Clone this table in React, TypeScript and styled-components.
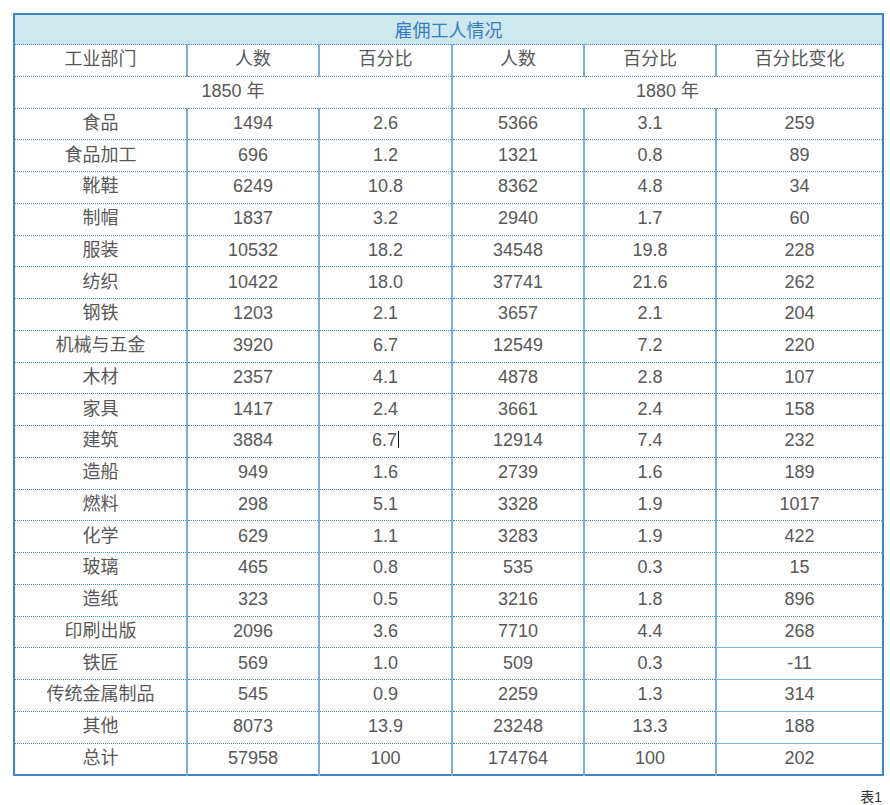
import React from "react";
import styled, { createGlobalStyle } from "styled-components";

const GlobalStyle = createGlobalStyle`
  html, body {
    margin: 0;
    padding: 0;
    background: #ffffff;
  }
  body {
    font-family: "Liberation Sans", "Noto Sans CJK SC", sans-serif;
  }
`;

const outerBlue = "#3f85c5";
const innerBlue = "#7eaed8";
const dotBlue = "#3e8fd8";

const Page = styled.div`
  width: 890px;
  height: 805px;
  padding: 13px 0 0 13px;
  box-sizing: border-box;
`;

const Table = styled.table`
  width: 869px;
  border-collapse: collapse;
  table-layout: fixed;
  border: 2px solid ${outerBlue};
  color: #585858;
  font-size: 18px;
  font-weight: 400;
`;

const TitleCell = styled.th`
  height: 27px;
  padding: 0 0 2px;
  background: #cde9ef;
  color: #3a7bbf;
  font-weight: 400;
  font-size: 18px;
  line-height: 1;
  font-family: "Noto Sans CJK SC", sans-serif;
  text-align: center;
  border-bottom: 1px dotted ${dotBlue};
`;

const Cell = styled.td<{ $solid?: boolean }>`
  height: 28.75px;
  padding: 0 0 2px;
  text-align: center;
  vertical-align: middle;
  line-height: 1;
  border-left: 2px solid ${innerBlue};
  border-right: 2px solid ${innerBlue};
  border-top: 1px ${(p) => (p.$solid ? "solid" : "dotted")} ${(p) => (p.$solid ? innerBlue : dotBlue)};
  border-bottom: 1px ${(p) => (p.$solid ? "solid" : "dotted")} ${(p) => (p.$solid ? innerBlue : dotBlue)};

  &:first-child {
    border-left: none;
  }
  &:last-child {
    border-right: none;
  }
`;

const Caret = styled.span`
  display: inline-block;
  width: 0;
  height: 17px;
  margin-left: 1px;
  border-left: 1px solid #111;
  vertical-align: -2px;
`;

const Caption = styled.div`
  width: 869px;
  margin-top: 10px;
  text-align: right;
  font-size: 14px;
  color: #333333;
`;

type Row = [string, string, string, string, string, string];

const rows: Row[] = [
  ["食品", "1494", "2.6", "5366", "3.1", "259"],
  ["食品加工", "696", "1.2", "1321", "0.8", "89"],
  ["靴鞋", "6249", "10.8", "8362", "4.8", "34"],
  ["制帽", "1837", "3.2", "2940", "1.7", "60"],
  ["服装", "10532", "18.2", "34548", "19.8", "228"],
  ["纺织", "10422", "18.0", "37741", "21.6", "262"],
  ["钢铁", "1203", "2.1", "3657", "2.1", "204"],
  ["机械与五金", "3920", "6.7", "12549", "7.2", "220"],
  ["木材", "2357", "4.1", "4878", "2.8", "107"],
  ["家具", "1417", "2.4", "3661", "2.4", "158"],
  ["建筑", "3884", "6.7", "12914", "7.4", "232"],
  ["造船", "949", "1.6", "2739", "1.6", "189"],
  ["燃料", "298", "5.1", "3328", "1.9", "1017"],
  ["化学", "629", "1.1", "3283", "1.9", "422"],
  ["玻璃", "465", "0.8", "535", "0.3", "15"],
  ["造纸", "323", "0.5", "3216", "1.8", "896"],
  ["印刷出版", "2096", "3.6", "7710", "4.4", "268"],
  ["铁匠", "569", "1.0", "509", "0.3", "-11"],
  ["传统金属制品", "545", "0.9", "2259", "1.3", "314"],
  ["其他", "8073", "13.9", "23248", "13.3", "188"],
  ["总计", "57958", "100", "174764", "100", "202"],
];

// from this row on the change column has solid rules
const solidFrom = 17;

export default function App() {
  return (
    <Page>
      <GlobalStyle />
      <Table>
        <colgroup>
          <col style={{ width: 173 }} />
          <col style={{ width: 132 }} />
          <col style={{ width: 133 }} />
          <col style={{ width: 132 }} />
          <col style={{ width: 132 }} />
          <col style={{ width: 167 }} />
        </colgroup>
        <thead>
          <tr>
            <TitleCell colSpan={6}>雇佣工人情况</TitleCell>
          </tr>
        </thead>
        <tbody>
          <tr>
            <Cell>工业部门</Cell>
            <Cell>人数</Cell>
            <Cell>百分比</Cell>
            <Cell>人数</Cell>
            <Cell>百分比</Cell>
            <Cell>百分比变化</Cell>
          </tr>
          <tr>
            <Cell colSpan={3}>1850 年</Cell>
            <Cell colSpan={3}>1880 年</Cell>
          </tr>
          {rows.map((r, i) => (
            <tr key={r[0]}>
              {r.map((v, j) => (
                <Cell key={j} $solid={j === 5 && i >= solidFrom}>
                  {v}
                  {i === 10 && j === 2 && <Caret />}
                </Cell>
              ))}
            </tr>
          ))}
        </tbody>
      </Table>
      <Caption>表1</Caption>
    </Page>
  );
}
